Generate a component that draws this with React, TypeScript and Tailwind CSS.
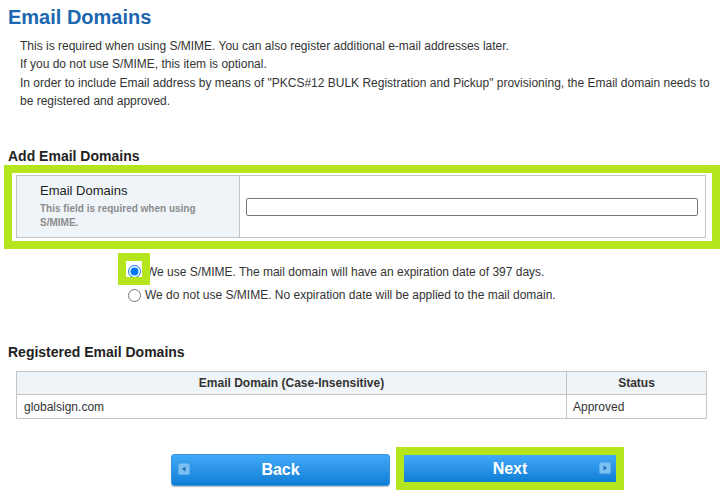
export default function App() {
  return (
    <div className="w-[727px] h-[499px] overflow-hidden bg-white text-[#333] font-['Liberation_Sans',Arial,sans-serif]">
      <h1 className="pt-[5px] pl-[8px] text-[20px] leading-[24px] font-bold text-[#1b67b1]">Email Domains</h1>
      <div className="mt-[8px] pl-[20px] pr-[12px] text-[12px] leading-[18.33px]">
        <p>This is required when using S/MIME. You can also register additional e-mail addresses later.</p>
        <p>If you do not use S/MIME, this item is optional.</p>
        <p>
          In order to include Email address by means of "PKCS#12 BULK Registration and Pickup" provisioning, the Email domain needs to be registered and approved.
        </p>
      </div>

      <h2 className="mt-[38px] pl-[8px] text-[14px] leading-[17px] font-bold text-[#222]">Add Email Domains</h2>
      <div className="ml-[4px] w-[716px] border-[8px] border-[#b5e61d] pt-[2px] pl-[4px] pr-[6px] pb-[3px]">
        <div className="flex h-[63px] border border-[#c4c4c4]">
          <div className="w-[223px] bg-[#eff4f8] border-r border-[#c4c4c4] flex items-center pl-[23px]">
            <div className="w-[175px]">
              <div className="text-[13px] leading-[16px] text-[#222]">Email Domains</div>
              <div className="mt-[3px] text-[10px] leading-[14px] font-bold text-[#8c8c8c]">
                This field is required when using S/MIME.
              </div>
            </div>
          </div>
          <div className="flex-1 flex items-center pl-[6px] pr-[7px]">
            <input type="text" className="w-full h-[18px] border border-[#767676] rounded-[2px] bg-white" />
          </div>
        </div>
      </div>

      <div className="mt-[11px] pl-[128px] text-[12px] text-[#333]">
        <label className="flex items-center h-[23px]">
          <span className="relative flex">
            <input type="radio" name="smime" defaultChecked className="m-0 w-[13px] h-[13px]" />
            <span className="absolute left-[-10px] top-[-12px] w-[32px] h-[32px] border-[8px] border-[#b5e61d]" />
          </span>
          <span className="ml-[5px]">We use S/MIME. The mail domain will have an expiration date of 397 days.</span>
        </label>
        <label className="flex items-center h-[24px]">
          <input type="radio" name="smime" className="m-0 w-[13px] h-[13px]" />
          <span className="ml-[4px]">We do not use S/MIME. No expiration date will be applied to the mail domain.</span>
        </label>
      </div>

      <h2 className="mt-[37px] pl-[8px] text-[14px] leading-[17px] font-bold text-[#222]">Registered Email Domains</h2>
      <div className="mt-[10px] ml-[16px] w-[691px] border border-[#c4c4c4] text-[12px] text-[#333]">
        <div className="flex h-[23px] bg-[#eff4f8] border-b border-[#c4c4c4] font-bold">
          <div className="w-[550px] border-r border-[#c4c4c4] flex items-center justify-center">
            Email Domain (Case-Insensitive)
          </div>
          <div className="flex-1 flex items-center justify-center">Status</div>
        </div>
        <div className="flex h-[23px]">
          <div className="w-[550px] border-r border-[#c4c4c4] flex items-center pl-[7px]">globalsign.com</div>
          <div className="flex-1 flex items-center pl-[6px]">Approved</div>
        </div>
      </div>

      <div className="mt-[28px] pl-[171px] flex items-start gap-[6px]">
        <button className="mt-[7px] relative w-[219px] h-[32px] rounded-[3px] border border-[#3a95de] bg-linear-to-b from-[#41a9f8] to-[#0a7ed6] text-white text-[16px] font-bold shadow-[0_1px_1px_rgba(0,0,0,0.25)] flex items-center justify-center">
          <span className="absolute left-[6px] top-[8px] w-[12px] h-[12px] rounded-[2px] bg-[#7cc0f2] border border-[#5aaeea] flex items-center justify-center">
            <svg width="6" height="6" viewBox="0 0 6 6">
              <path d="M4.5 0.5 L1 3 L4.5 5.5 Z" fill="#1c6fb8" />
            </svg>
          </span>
          Back
        </button>
        <div className="border-[8px] border-[#b5e61d]">
          <button className="relative w-[212px] h-[27px] bg-linear-to-b from-[#41a9f8] to-[#0a7ed6] text-white text-[16px] font-bold flex items-center justify-center">
            Next
            <span className="absolute left-[195px] top-[7px] w-[12px] h-[12px] rounded-[2px] bg-[#7cc0f2] border border-[#5aaeea] flex items-center justify-center">
              <svg width="6" height="6" viewBox="0 0 6 6">
                <path d="M1.5 0.5 L5 3 L1.5 5.5 Z" fill="#1c6fb8" />
              </svg>
            </span>
          </button>
        </div>
      </div>
    </div>
  );
}
